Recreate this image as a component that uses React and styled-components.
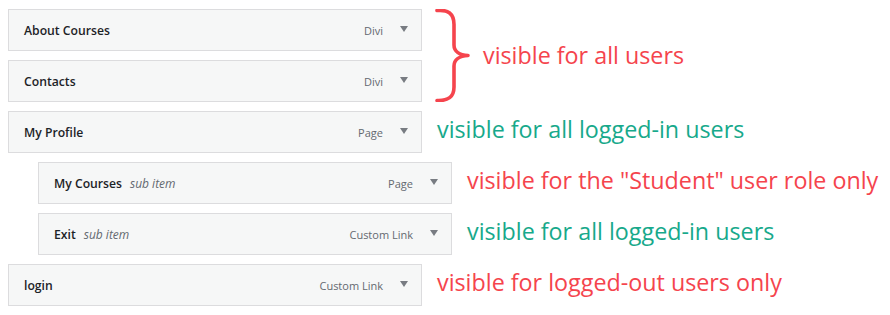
import React from "react";
import styled, { createGlobalStyle } from "styled-components";

const Global = createGlobalStyle`
  html, body { margin: 0; padding: 0; background: #ffffff; }
  body { font-family: "Open Sans", "Noto Sans", sans-serif; }
`;

const Page = styled.div`
  display: flex;
  flex-direction: column;
  gap: 9px;
  padding: 9px 0 0 8px;
`;

const Group = styled.div`
  display: flex;
  align-items: center;
`;

const Stack = styled.div`
  display: flex;
  flex-direction: column;
  gap: 9px;
`;

const Row = styled.div`
  display: flex;
  align-items: center;
  padding-left: ${(p) => (p.$sub ? 30 : 0)}px;
`;

const Box = styled.div`
  box-sizing: border-box;
  width: 414px;
  height: 42px;
  border: 1px solid #dcdcde;
  background: #f6f7f7;
  display: flex;
  align-items: center;
  padding: 0 13px 0 15px;
`;

const Title = styled.span`
  font-family: "Open Sans", sans-serif;
  font-size: 12.2px;
  font-weight: 600;
  color: #1d2327;
`;

const SubLabel = styled.span`
  font-family: "Open Sans", sans-serif;
  font-size: 12px;
  font-style: italic;
  font-weight: 400;
  color: #646970;
  margin-left: 8px;
`;

const Type = styled.span`
  margin-left: auto;
  margin-right: 17px;
  font-family: "Open Sans", sans-serif;
  font-size: 11px;
  color: #646970;
`;

const Arrow = styled.span`
  width: 0;
  height: 0;
  border-left: 4px solid transparent;
  border-right: 4px solid transparent;
  border-top: 6px solid #787c82;
  margin-top: -2px;
`;

const Note = styled.span`
  font-family: "Open Sans", sans-serif;
  font-size: 23.3px;
  line-height: 1;
  color: ${(p) => (p.$tone === "green" ? "#17a98b" : "#f5444d")};
  margin-left: ${(p) => p.$gap ?? 15}px;
  margin-top: ${(p) => p.$lift ?? -4}px;
  white-space: nowrap;
`;

const BraceSvg = styled.svg`
  display: block;
  margin-left: 13px;
  flex: none;
`;

function Brace() {
  return (
    <BraceSvg width="36" height="93" viewBox="0 0 36 93">
      <path
        d="M2,1.5 C13,0.5 19,4.5 19,15.5 L19,36 C19,42 24,46 33,46.5 C24,47 19,51 19,57 L19,78 C19,88 13,92 2,91.5"
        fill="none"
        stroke="#f5444d"
        strokeWidth="3.6"
        strokeLinecap="round"
        strokeLinejoin="round"
      />
    </BraceSvg>
  );
}

function Item({ title, sub, type }) {
  return (
    <Box>
      <Title>{title}</Title>
      {sub && <SubLabel>sub item</SubLabel>}
      <Type>{type}</Type>
      <Arrow />
    </Box>
  );
}

export default function App() {
  return (
    <>
      <Global />
      <Page>
        <Group>
          <Stack>
            <Item title="About Courses" type="Divi" />
            <Item title="Contacts" type="Divi" />
          </Stack>
          <Brace />
          <Note $tone="red" $gap={12} $lift={0}>
            visible for all users
          </Note>
        </Group>
        <Row>
          <Item title="My Profile" type="Page" />
          <Note $tone="green">visible for all logged-in users</Note>
        </Row>
        <Row $sub>
          <Item title="My Courses" sub type="Page" />
          <Note $tone="red">visible for the "Student" user role only</Note>
        </Row>
        <Row $sub>
          <Item title="Exit" sub type="Custom Link" />
          <Note $tone="green">visible for all logged-in users</Note>
        </Row>
        <Row>
          <Item title="login" type="Custom Link" />
          <Note $tone="red">visible for logged-out users only</Note>
        </Row>
      </Page>
    </>
  );
}
